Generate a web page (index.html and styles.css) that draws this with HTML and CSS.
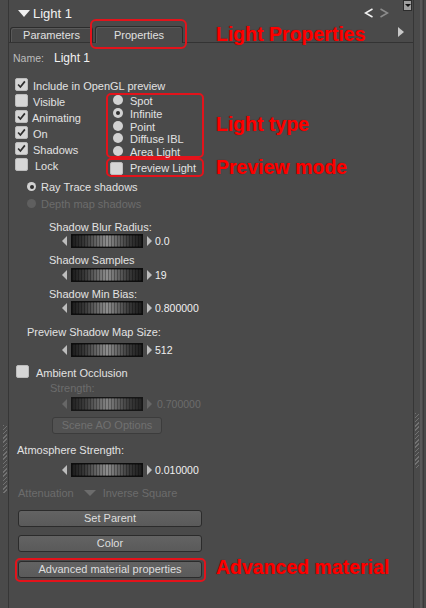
FILE: index.html
```html
<!DOCTYPE html>
<html lang="en">
<head>
<meta charset="utf-8">
<title>Light 1 – Properties</title>
<link rel="stylesheet" href="styles.css">
</head>
<body>
<div class="window">
  <div class="gutter gutter-left"><div class="grip grip-left"></div></div>

  <div class="panel">
    <div class="titlebar">
      <span class="disclosure"></span>
      <span class="title">Light 1</span>
      <span class="nav">
        <svg class="nav-prev" width="10" height="10" viewBox="0 0 10 10"><polyline points="8.5,1 1.5,5 8.5,9"/></svg>
        <svg class="nav-next" width="10" height="10" viewBox="0 0 10 10"><polyline points="1.5,1 8.5,5 1.5,9"/></svg>
      </span>
      <span class="menu-btn"></span>
    </div>

    <div class="tabbar">
      <div class="tab tab-params">Parameters</div>
      <div class="tab tab-active">Properties</div>
      <span class="tab-scroll"></span>
    </div>

    <div class="content">
      <div class="name-row"><span class="name-label">Name:</span><span class="name-value">Light 1</span></div>

      <div class="check check-include">
        <span class="box"><svg viewBox="0 0 13 13"><polyline points="2.5,6.5 5.2,9.5 10.5,2.8"/></svg></span>
        <span class="check-text">Include in OpenGL preview</span>
      </div>

      <div class="options">
        <div class="toggles">
          <div class="check"><span class="box"></span><span class="check-text">Visible</span></div>
          <div class="check check-tight"><span class="box"><svg viewBox="0 0 13 13"><polyline points="2.5,6.5 5.2,9.5 10.5,2.8"/></svg></span><span class="check-text">Animating</span></div>
          <div class="check"><span class="box"><svg viewBox="0 0 13 13"><polyline points="2.5,6.5 5.2,9.5 10.5,2.8"/></svg></span><span class="check-text">On</span></div>
          <div class="check"><span class="box"><svg viewBox="0 0 13 13"><polyline points="2.5,6.5 5.2,9.5 10.5,2.8"/></svg></span><span class="check-text">Shadows</span></div>
          <div class="check check-wide"><span class="box"></span><span class="check-text">Lock</span></div>
        </div>

        <div class="type-col">
          <div class="radio-group marked">
            <div class="radio"><span class="dot"></span><span class="radio-text">Spot</span></div>
            <div class="radio"><span class="dot on"></span><span class="radio-text">Infinite</span></div>
            <div class="radio"><span class="dot"></span><span class="radio-text">Point</span></div>
            <div class="radio"><span class="dot"></span><span class="radio-text">Diffuse IBL</span></div>
            <div class="radio"><span class="dot"></span><span class="radio-text">Area Light</span></div>
          </div>
          <div class="preview-box marked">
            <div class="check check-preview"><span class="box"></span><span class="check-text">Preview Light</span></div>
          </div>
        </div>
      </div>

      <div class="shadow-mode">
        <div class="radio radio-row"><span class="dot small on"></span><span class="radio-text">Ray Trace shadows</span></div>
        <div class="radio radio-row disabled"><span class="dot small"></span><span class="radio-text">Depth map shadows</span></div>
      </div>

      <div class="field field-blur">
        <div class="field-label">Shadow Blur Radius:</div>
        <div class="slider"><span class="arrow-l"></span><span class="track"></span><span class="arrow-r"></span><span class="value">0.0</span></div>
      </div>

      <div class="field field-samples">
        <div class="field-label">Shadow Samples</div>
        <div class="slider"><span class="arrow-l"></span><span class="track"></span><span class="arrow-r"></span><span class="value">19</span></div>
      </div>

      <div class="field field-bias">
        <div class="field-label">Shadow Min Bias:</div>
        <div class="slider"><span class="arrow-l"></span><span class="track"></span><span class="arrow-r"></span><span class="value">0.800000</span></div>
      </div>

      <div class="field field-mapsize">
        <div class="field-label">Preview Shadow Map Size:</div>
        <div class="slider"><span class="arrow-l"></span><span class="track"></span><span class="arrow-r"></span><span class="value">512</span></div>
      </div>

      <div class="check check-ao"><span class="box"></span><span class="check-text">Ambient Occlusion</span></div>

      <div class="field field-strength disabled">
        <div class="field-label">Strength:</div>
        <div class="slider"><span class="arrow-l"></span><span class="track"></span><span class="arrow-r"></span><span class="value">0.700000</span></div>
      </div>

      <button class="btn btn-ao" disabled>Scene AO Options</button>

      <div class="field field-atmo">
        <div class="field-label">Atmosphere Strength:</div>
        <div class="slider"><span class="arrow-l"></span><span class="track"></span><span class="arrow-r"></span><span class="value">0.010000</span></div>
      </div>

      <div class="attenuation disabled">
        <span>Attenuation</span><span class="combo-arrow"></span><span>Inverse Square</span>
      </div>

      <button class="btn btn-wide btn-parent">Set Parent</button>
      <button class="btn btn-wide btn-color">Color</button>
      <div class="btn-mark marked">
        <button class="btn btn-wide">Advanced material properties</button>
      </div>
    </div>
  </div>

  <div class="gutter gutter-right"><div class="grip grip-right"></div></div>

  <div class="note note-props">Light Properties</div>
  <div class="note note-type">Light type</div>
  <div class="note note-preview">Preview mode</div>
  <div class="note note-material">Advanced material</div>
</div>
</body>
</html>
```

FILE: styles.css
```css
* { box-sizing: border-box; }

html, body {
  margin: 0;
  padding: 0;
}

body {
  background: #4a4a4a;
  font-family: "Liberation Sans", Arial, sans-serif;
  font-size: 11px;
  color: #e2e2e2;
}

.window {
  position: relative;
  width: 426px;
  height: 608px;
  display: flex;
  overflow: hidden;
  background: #4a4a4a;
}

/* side gutters with resize grips */
.gutter {
  flex: none;
  display: flex;
  flex-direction: column;
}

.gutter-left {
  width: 9px;
  border-right: 1px solid #363636;
}

.gutter-right {
  width: 13px;
  border-left: 1px solid #363636;
  background: linear-gradient(90deg, transparent 0 6px, #585858 6px 8px, transparent 8px 9px, #3a3a3a 9px 10px, transparent 10px);
}

.grip {
  width: 4px;
  background: repeating-linear-gradient(135deg, #727272 0 1px, transparent 1px 3px);
}

.grip-left {
  margin: 425px 0 0 3px;
  height: 68px;
}

.grip-right {
  margin: 413px 0 0 1px;
  height: 55px;
}

/* main panel */
.panel {
  flex: 1;
  display: flex;
  flex-direction: column;
  min-width: 0;
}

.titlebar {
  height: 26px;
  display: flex;
  align-items: center;
}

.disclosure {
  margin-left: 9px;
  width: 0;
  height: 0;
  border-left: 6px solid transparent;
  border-right: 6px solid transparent;
  border-top: 7px solid #f0f0f0;
}

.title {
  margin-left: 3px;
  font-size: 13px;
  color: #f2f2f2;
}

.nav {
  margin-left: auto;
  display: flex;
  gap: 5px;
  margin-top: -1px;
}

.nav svg polyline {
  fill: none;
  stroke-width: 1.5;
}

.nav-prev polyline { stroke: #f2f2f2; }
.nav-next polyline { stroke: #8c8c8c; }

.menu-btn {
  align-self: flex-start;
  margin: 0 1px 0 14px;
  width: 9px;
  height: 11px;
  background: #9e9e9e;
  border: 1px solid #2c2c2c;
  display: flex;
  align-items: center;
  justify-content: center;
}

.menu-btn::after {
  content: "";
  border-left: 3px solid transparent;
  border-right: 3px solid transparent;
  border-top: 3px solid #111;
}

/* tabs */
.tabbar {
  height: 17px;
  display: flex;
  align-items: flex-end;
  border-bottom: 1px solid #333;
}

.tab {
  position: relative;
  height: 15px;
  display: flex;
  align-items: center;
  justify-content: center;
  border: 1px solid #2c2c2c;
  border-bottom: none;
  border-radius: 3px 3px 0 0;
  background: #474747;
  box-shadow: inset 1px 1px 0 #595959;
  color: #e0e0e0;
}

.tab-params {
  margin-left: 1px;
  width: 83px;
}

.tab-active {
  margin-left: 2px;
  width: 88px;
  height: 17px;
  margin-bottom: -1px;
  background: #4a4a4a;
}

.tab-active::after {
  content: "";
  position: absolute;
  left: -6px;
  right: -5px;
  top: -8px;
  bottom: -6px;
  border: 2px solid #e3131b;
  border-radius: 6px;
}

.tab-scroll {
  align-self: flex-start;
  margin: 1px 9px 0 auto;
  width: 0;
  height: 0;
  border-top: 5px solid transparent;
  border-bottom: 5px solid transparent;
  border-left: 6px solid #c8c8c8;
}

/* body of the property sheet */
.content {
  display: flex;
  flex-direction: column;
  align-items: flex-start;
}

.name-row {
  margin: 7px 0 0 4px;
  height: 16px;
  display: flex;
  align-items: center;
}

.name-label {
  width: 41px;
  font-size: 10.5px;
  color: #bdbdbd;
}

.name-value {
  font-size: 12px;
  color: #f2f2f2;
}

/* checkboxes */
.check {
  height: 16px;
  display: flex;
  align-items: flex-start;
  gap: 5px;
}

.check-tight { gap: 4px; }
.check-wide { gap: 7px; }

.box {
  flex: none;
  margin-top: 1px;
  width: 13px;
  height: 13px;
  border-radius: 2px;
  background: #d6d6d6;
  border: 1px solid #bcbcbc;
  display: flex;
}

.box svg {
  width: 11px;
  height: 11px;
}

.box polyline {
  fill: none;
  stroke: #2e2e2e;
  stroke-width: 2;
}

.check-text {
  line-height: 16px;
  padding-top: 1px;
  white-space: nowrap;
}

.check-include {
  margin: 11px 0 0 6px;
}

/* visibility toggles + light type */
.options {
  margin-left: 6px;
  display: flex;
}

.toggles {
  width: 91px;
  display: flex;
  flex-direction: column;
}

.type-col {
  display: flex;
  flex-direction: column;
}

.marked {
  border: 2px solid #e3131b;
  border-radius: 5px;
}

.radio-group {
  width: 98px;
  height: 65px;
  padding: 0 5px;
  display: flex;
  flex-direction: column;
  justify-content: space-between;
}

.radio {
  height: 10px;
  display: flex;
  align-items: flex-start;
  gap: 7px;
}

.dot {
  flex: none;
  width: 10px;
  height: 10px;
  border-radius: 50%;
  background: #d2d2d2;
  display: flex;
  align-items: center;
  justify-content: center;
}

.dot.on::after {
  content: "";
  width: 4px;
  height: 4px;
  border-radius: 50%;
  background: #2e2e2e;
}

.radio-text {
  line-height: 12px;
  white-space: nowrap;
}

.preview-box {
  width: 98px;
  height: 19px;
  padding: 1px 0 0 2px;
}

.check-preview {
  height: 15px;
  gap: 7px;
}

.check-preview .check-text {
  line-height: 14px;
  padding-top: 0;
}

/* shadow type */
.shadow-mode {
  margin: 2px 0 0 18px;
  display: flex;
  flex-direction: column;
}

.radio-row {
  height: 17px;
  gap: 5px;
}

.dot.small {
  margin-top: 3px;
  width: 9px;
  height: 9px;
}

.radio-row .radio-text {
  line-height: 16px;
}

.disabled,
.disabled .radio-text {
  color: #6c6c6c;
}

.disabled .dot {
  background: #5f5f5f;
}

/* labelled sliders: the slider always starts at the same column */
.field {
  display: flex;
  flex-direction: column;
  align-items: flex-start;
}

.field-label {
  line-height: 14px;
  white-space: nowrap;
}

.slider {
  margin-left: 13px;
  height: 14px;
  display: flex;
  align-items: center;
}

.arrow-l,
.arrow-r {
  width: 0;
  height: 0;
  border-top: 5.5px solid transparent;
  border-bottom: 5.5px solid transparent;
}

.arrow-l { border-right: 5px solid #bdbdbd; }
.arrow-r { border-left: 5px solid #bdbdbd; margin-left: 4px; }

.track {
  margin-left: 4px;
  width: 72px;
  height: 14px;
  border: 1px solid #0d0d0d;
  background:
    repeating-linear-gradient(90deg, rgba(0, 0, 0, 0.3) 0 1px, transparent 1px 3px),
    linear-gradient(90deg, #1c1c1c 0%, #383838 18%, #8e8e8e 50%, #383838 82%, #1c1c1c 100%);
  box-shadow: inset 0 1px 0 rgba(0, 0, 0, 0.35), inset 0 -1px 0 rgba(0, 0, 0, 0.35);
}

.value {
  margin-left: 3px;
  font-size: 10.5px;
  line-height: 14px;
  color: #f0f0f0;
}

.disabled .arrow-l { border-right-color: #676767; }
.disabled .arrow-r { border-left-color: #676767; }
.disabled .track { opacity: 0.85; }
.disabled .value { color: #6c6c6c; margin-left: 5px; }

.field-blur { margin: 7px 0 0 40px; }

.field-samples { margin: 5px 0 0 40px; }
.field-samples .slider { margin-top: 1px; }

.field-bias { margin: 5px 0 0 40px; }

.field-mapsize { margin: 10px 0 0 18px; }
.field-mapsize .slider { margin-left: 35px; margin-top: 4px; }

.check-ao {
  margin: 7px 0 0 7px;
  gap: 7px;
}

.field-strength { margin: 1px 0 0 41px; }
.field-strength .slider { margin-left: 12px; margin-top: 2px; }

.field-atmo { margin: 9px 0 0 8px; }
.field-atmo .slider { margin-left: 45px; margin-top: 6px; }

/* combo row */
.attenuation {
  margin: 8px 0 0 9px;
  height: 16px;
  line-height: 16px;
  display: flex;
  align-items: center;
  white-space: nowrap;
}

.combo-arrow {
  margin: 0 7px 0 10px;
  width: 0;
  height: 0;
  border-left: 6px solid transparent;
  border-right: 6px solid transparent;
  border-top: 6px solid #6c6c6c;
}

/* push buttons */
.btn {
  display: block;
  margin: 0;
  padding: 0;
  height: 17px;
  font-family: inherit;
  font-size: 11px;
  line-height: 15px;
  color: #dedede;
  background: linear-gradient(#636363, #5a5a5a);
  border: 1px solid #2b2b2b;
  border-radius: 3px;
  text-align: center;
}

.btn-ao {
  margin: 6px 0 0 43px;
  width: 110px;
  color: #707070;
  background: #525252;
  border-color: #3c3c3c;
}

.btn-wide { width: 184px; }

.btn-parent { margin: 9px 0 0 9px; }
.btn-color { margin: 8px 0 0 9px; }

.btn-mark {
  margin: 6px 0 0 6px;
  width: 191px;
  padding: 1px 2px 2px 1px;
}

/* red callouts */
.note {
  position: absolute;
  left: 216px;
  font-family: "Liberation Sans", Arial, sans-serif;
  font-weight: bold;
  font-size: 19.5px;
  line-height: 20px;
  color: #ff0000;
  text-shadow: 0 0 1px #6a0000;
  white-space: nowrap;
}

.note-props { top: 24px; }
.note-type { top: 114px; }
.note-preview { top: 157px; }
.note-material { top: 557px; }
```
